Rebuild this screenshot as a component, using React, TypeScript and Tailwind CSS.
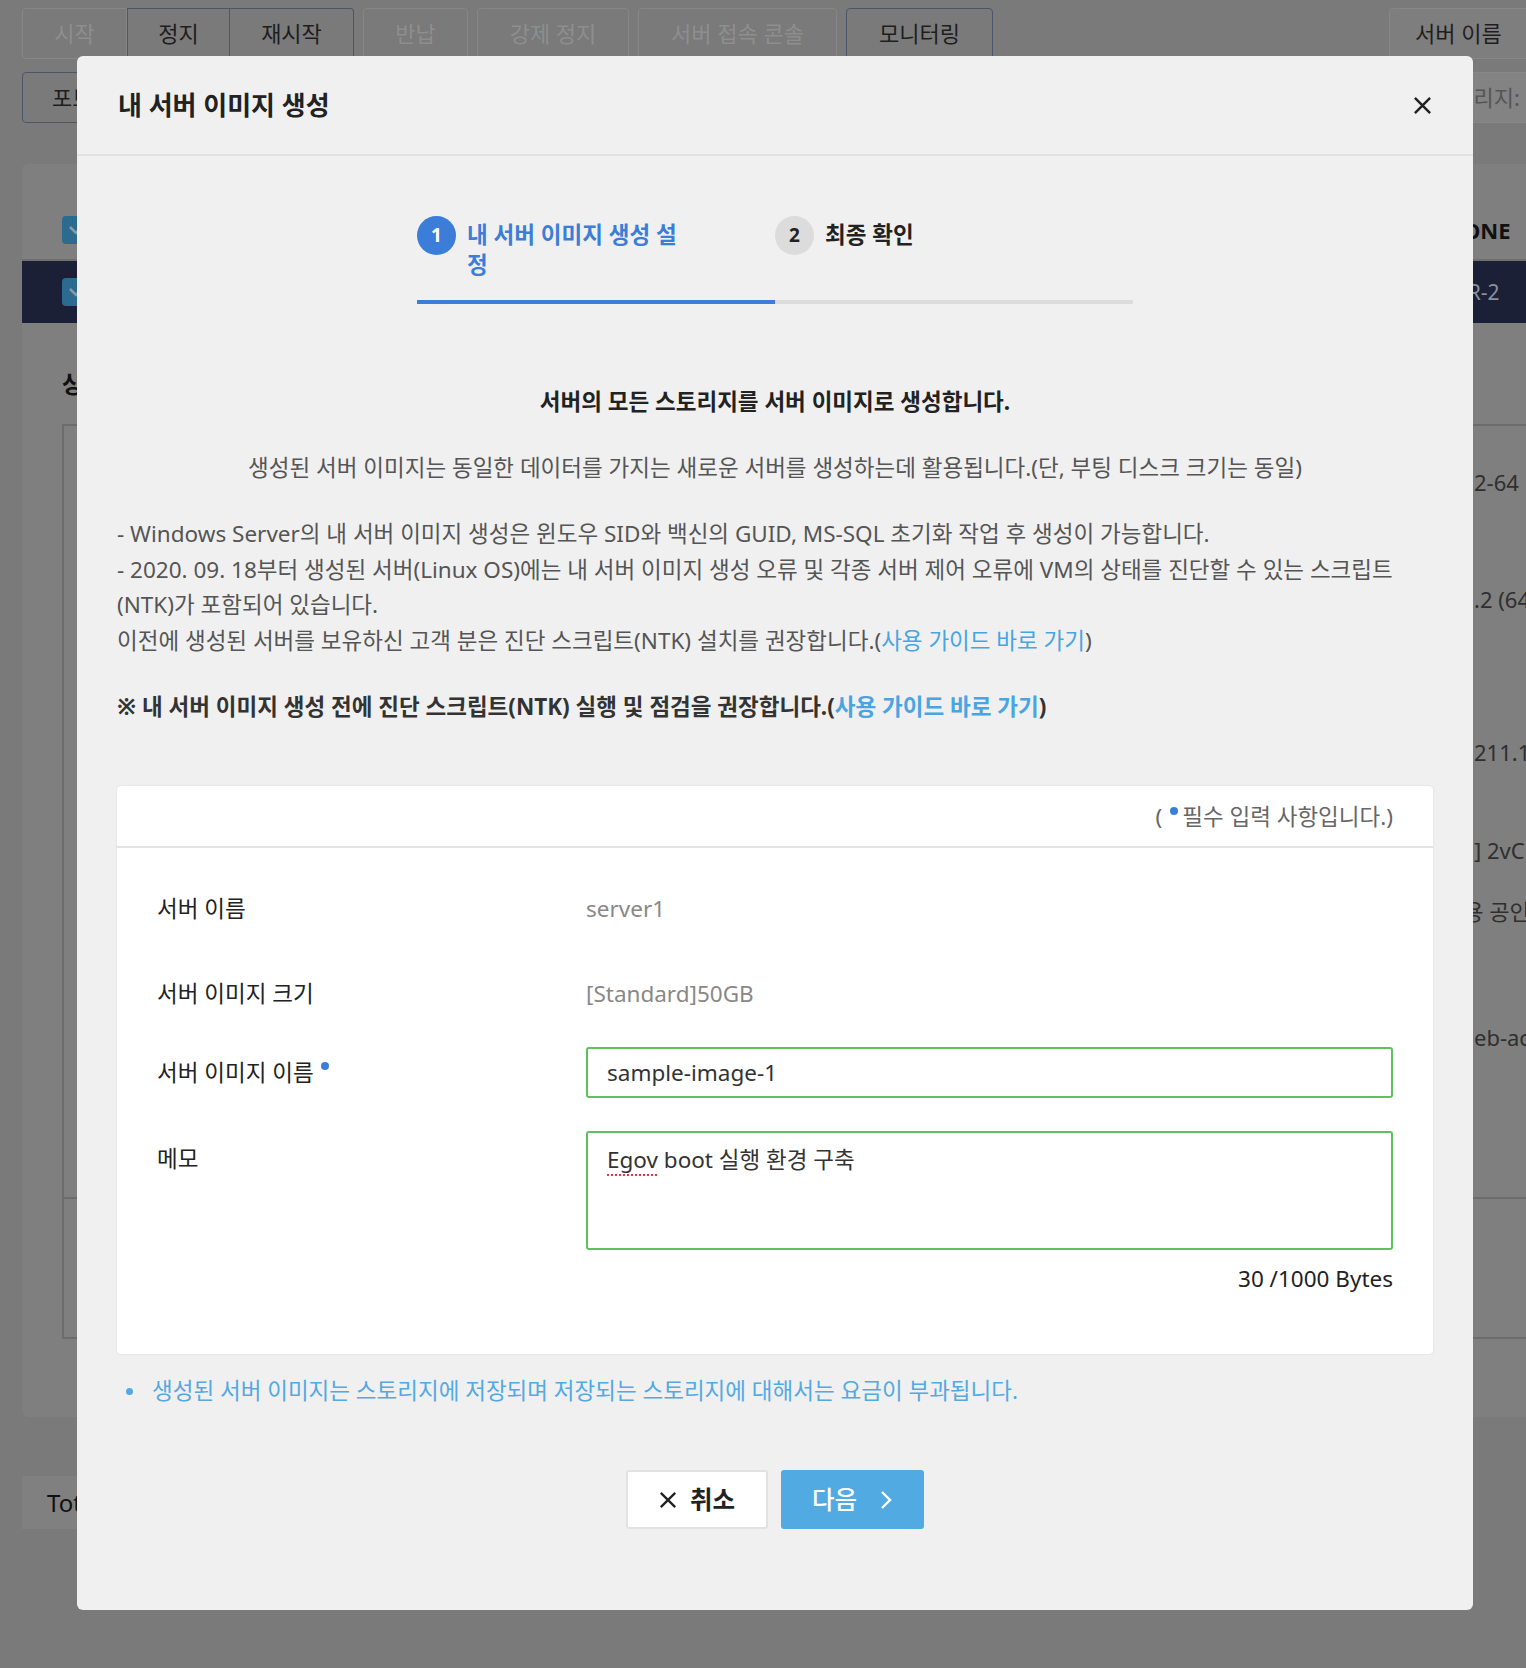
import React from "react";

function XIcon({ size, stroke, color }: { size: number; stroke: number; color: string }) {
  return (
    <svg width={size} height={size} viewBox="0 0 20 20" fill="none">
      <path d="M2 2 L18 18 M18 2 L2 18" stroke={color} strokeWidth={stroke} strokeLinecap="butt" />
    </svg>
  );
}

function Check() {
  return (
    <div className="w-[28px] h-[28px] rounded-[4px] bg-[#2d6a8f] flex items-center justify-center">
      <svg width="16" height="12" viewBox="0 0 16 12" fill="none">
        <path d="M2 3 L8 9 L14 3" stroke="#8a9aa5" strokeWidth="2.5" />
      </svg>
    </div>
  );
}

function Background() {
  return (
    <div className="flex flex-col pl-[22px] pt-[8px] text-[22px] whitespace-nowrap">
      <div className="flex h-[51px]">
        <div className="flex shrink-0">
          <div className="shrink-0 w-[105px] flex items-center justify-center border border-[#878787] rounded-l-[4px] text-[#8e8e8e]">시작</div>
          <div className="shrink-0 w-[103px] flex items-center justify-center border-[1.5px] border-[#4b5667] text-[#1e1e1e]">정지</div>
          <div className="shrink-0 w-[124px] flex items-center justify-center border-[1.5px] border-l-0 border-[#4b5667] rounded-r-[4px] text-[#1e1e1e]">재시작</div>
        </div>
        <div className="shrink-0 ml-[9px] w-[105px] flex items-center justify-center border border-[#878787] rounded-[4px] text-[#8e8e8e]">반납</div>
        <div className="shrink-0 ml-[9px] w-[152px] flex items-center justify-center border border-[#878787] rounded-[4px] text-[#8e8e8e]">강제 정지</div>
        <div className="shrink-0 ml-[9px] w-[199px] flex items-center justify-center border border-[#878787] rounded-[4px] text-[#8e8e8e]">서버 접속 콘솔</div>
        <div className="shrink-0 ml-[9px] w-[147px] flex items-center justify-center border-[1.5px] border-[#4b5667] rounded-[4px] text-[#1e1e1e]">모니터링</div>
        <div className="shrink-0 ml-[396px] w-[150px] flex items-center pl-[25px] border border-[#878787] rounded-[4px] bg-[#7e7e7e] text-[#1e1e1e]">서버 이름</div>
      </div>
      <div className="flex h-[51px] mt-[13px]">
        <div className="shrink-0 w-[140px] flex items-center pl-[29px] border-[1.5px] border-[#4b5667] rounded-[4px] text-[#1e1e1e]">포트</div>
        <div className="shrink-0 ml-[1262px] w-[130px] flex items-center pl-[8px] border border-[#878787] rounded-[4px] bg-[#838383] text-[#555]">스토리지:</div>
      </div>
      <div className="mt-[41px] w-[1530px] h-[1253px] shrink-0 rounded-[6px] bg-[#7f7f7f] flex flex-col">
        <div className="h-[97px] flex items-start border-b-2 border-[#6f6f6f]">
          <div className="shrink-0 ml-[40px] mt-[52px]"><Check /></div>
          <div className="shrink-0 ml-[1355px] mt-[51px] text-[22px] font-bold text-[#111] leading-[30px]">NONE</div>
        </div>
        <div className="h-[62px] flex items-center bg-[#1b2036]">
          <div className="shrink-0 ml-[40px]"><Check /></div>
          <div className="shrink-0 ml-[1366px] text-[21px] text-[#8a90a0] leading-[30px]">ER-2</div>
        </div>
        <div className="ml-[40px] mt-[46px] text-[24px] font-bold text-[#111] leading-[30px]">상세 정보</div>
        <div className="ml-[40px] mt-[25px] w-[1480px] h-[915px] border-2 border-[#6c6c6c] flex flex-col">
          <div className="h-[771px] flex">
            <div className="shrink-0 ml-[1410px] flex flex-col text-[#2f2f2f] leading-[30px]">
              <div className="mt-[41px]">2-64</div>
              <div className="mt-[87px]">.2 (64</div>
              <div className="mt-[123px]">211.1</div>
              <div className="mt-[68px]">] 2vC</div>
              <div className="mt-[31px] -ml-[31px]">사용 공인</div>
              <div className="mt-[96px]">eb-ac</div>
            </div>
          </div>
          <div className="border-t-2 border-[#6c6c6c]" />
        </div>
      </div>
      <div className="mt-[59px] w-[400px] h-[53px] bg-[#808080] flex items-center pl-[25px] text-[24px] text-[#111]">Total 1</div>
    </div>
  );
}

function Modal() {
  return (
    <div className="absolute left-[77px] top-[56px] w-[1396px] h-[1554px] rounded-[6px] bg-[#f0f0f0] flex flex-col text-[22.5px]">
      <div className="h-[100px] shrink-0 flex items-center justify-between px-[41px] border-b-2 border-[#e2e2e2]">
        <h2 className="text-[26px] font-bold text-[#222] leading-none">내 서버 이미지 생성</h2>
        <XIcon size={19} stroke={2.6} color="#222" />
      </div>
      <div className="px-[40px] flex flex-col">
        <div className="mt-[60px] mx-auto w-[716px] flex">
          <div className="w-[358px] h-[88px] border-b-4 border-[#3b7dd8] flex items-start">
            <div className="w-[39px] h-[39px] rounded-full bg-[#3b7dd8] text-white font-bold text-[19px] flex items-center justify-center shrink-0">1</div>
            <div className="ml-[11px] mt-[4px] w-[222px] text-[22.5px] font-bold leading-[30px] text-[#3b7dd8]">내 서버 이미지 생성 설정</div>
          </div>
          <div className="w-[358px] h-[88px] border-b-4 border-[#dcdcdc] flex items-start">
            <div className="w-[39px] h-[39px] rounded-full bg-[#dcdcdc] text-[#222] font-bold text-[19px] flex items-center justify-center shrink-0">2</div>
            <div className="ml-[11px] mt-[4px] text-[22.5px] font-bold leading-[30px] text-[#222]">최종 확인</div>
          </div>
        </div>
        <div className="mt-[80px] text-center font-bold leading-[36px] text-[#222]">서버의 모든 스토리지를 서버 이미지로 생성합니다.</div>
        <div className="mt-[30px] text-center leading-[36px] text-[#555]">생성된 서버 이미지는 동일한 데이터를 가지는 새로운 서버를 생성하는데 활용됩니다.(단, 부팅 디스크 크기는 동일)</div>
        <div className="mt-[30px] leading-[35.6px] text-[#555]">
          <div>- Windows Server의 내 서버 이미지 생성은 윈도우 SID와 백신의 GUID, MS-SQL 초기화 작업 후 생성이 가능합니다.</div>
          <div>- 2020. 09. 18부터 생성된 서버(Linux OS)에는 내 서버 이미지 생성 오류 및 각종 서버 제어 오류에 VM의 상태를 진단할 수 있는 스크립트<br />(NTK)가 포함되어 있습니다.</div>
          <div>
            이전에 생성된 서버를 보유하신 고객 분은 진단 스크립트(NTK) 설치를 권장합니다.(<span className="text-[#48a4e2]">사용 가이드 바로 가기</span>)
          </div>
        </div>
        <div className="mt-[31px] leading-[36px] font-bold text-[#333]">
          ※ 내 서버 이미지 생성 전에 진단 스크립트(NTK) 실행 및 점검을 권장합니다.(<span className="text-[#48a4e2]">사용 가이드 바로 가기</span>)
        </div>
        <div className="mt-[61px] bg-white rounded-[4px] shadow-[0_0_2px_rgba(0,0,0,0.12)] flex flex-col">
          <div className="h-[62px] flex items-center justify-end pr-[40px] border-b-2 border-[#e4e4e4] text-[#666]">
            <span>(</span>
            <span className="inline-block w-[8px] h-[8px] rounded-full bg-[#3b7dd8] ml-[8px] mr-[4px] relative -top-[5px]" />
            <span>필수 입력 사항입니다.)</span>
          </div>
          <div className="pt-[35px] px-[40px] pb-[60px] flex flex-col">
            <div className="h-[50px] flex items-center">
              <div className="w-[429px] text-[#222]">서버 이름</div>
              <div className="text-[#888]">server1</div>
            </div>
            <div className="mt-[35px] h-[50px] flex items-center">
              <div className="w-[429px] text-[#222]">서버 이미지 크기</div>
              <div className="text-[#888]">[Standard]50GB</div>
            </div>
            <div className="mt-[29px] h-[51px] flex items-center">
              <div className="w-[429px] text-[#222] flex items-center">
                서버 이미지 이름
                <span className="inline-block w-[8px] h-[8px] rounded-full bg-[#3b7dd8] ml-[7px] relative -top-[7px]" />
              </div>
              <div className="flex-1 h-[51px] border-2 border-[#5cc25c] rounded-[3px] bg-white px-[19px] flex items-center text-[#333]">sample-image-1</div>
            </div>
            <div className="mt-[33px] flex items-start">
              <div className="w-[429px] mt-[13px] leading-[30px] text-[#222]">메모</div>
              <div className="flex-1 h-[119px] border-2 border-[#5cc25c] rounded-[3px] bg-white px-[19px] pt-[12px] leading-[30px] text-[#333]">
                <span className="underline decoration-dotted decoration-[#e53935] decoration-2 underline-offset-[6px]">Egov</span> boot 실행 환경 구축
              </div>
            </div>
            <div className="mt-[14px] leading-[30px] text-right text-[#222]">30 /1000 Bytes</div>
          </div>
        </div>
        <div className="mt-[19px] flex items-center leading-[36px] text-[#52a9e3]">
          <span className="w-[7px] h-[7px] rounded-full bg-[#52a9e3] ml-[9px] shrink-0" />
          <span className="ml-[19px]">생성된 서버 이미지는 스토리지에 저장되며 저장되는 스토리지에 대해서는 요금이 부과됩니다.</span>
        </div>
        <div className="mt-[61px] flex justify-center gap-[13px]">
          <button className="w-[142px] h-[59px] bg-white border-2 border-[#e2e2e2] rounded-[3px] flex items-center justify-center gap-[13px] text-[24.5px] font-bold text-[#222]">
            <XIcon size={18} stroke={2.6} color="#222" />
            <span>취소</span>
          </button>
          <button className="w-[143px] h-[59px] bg-[#52aae3] rounded-[3px] flex items-center justify-center gap-[22px] text-[24.5px] font-medium text-white">
            <span>다음</span>
            <svg width="14" height="20" viewBox="0 0 14 20" fill="none">
              <path d="M3 2 L11 10 L3 18" stroke="#ffffff" strokeWidth="2.4" />
            </svg>
          </button>
        </div>
      </div>
    </div>
  );
}

export default function App() {
  return (
    <div className="relative w-[1526px] h-[1668px] overflow-hidden bg-[#7a7a7a] font-['Noto_Sans','Noto_Sans_CJK_KR',sans-serif]">
      <Background />
      <Modal />
    </div>
  );
}
